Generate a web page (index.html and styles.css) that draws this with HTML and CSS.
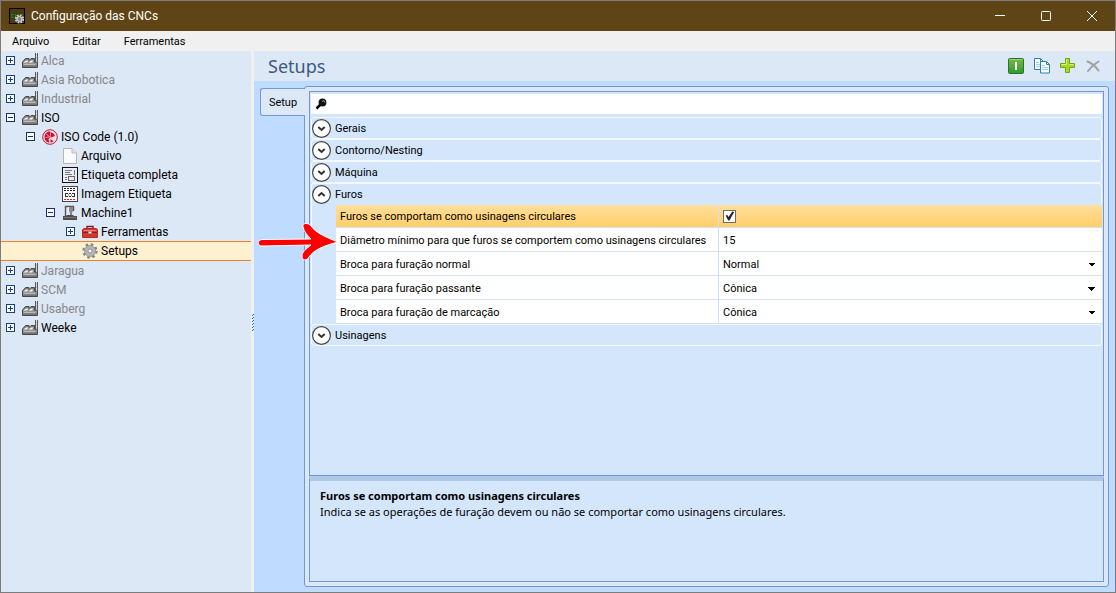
FILE: index.html
```
<!DOCTYPE html>
<html lang="pt-BR">

<head>
    <meta charset="UTF-8">
    <title>Configuração das CNCs</title>
    <link rel="stylesheet" href="styles.css">
</head>

<body>
    <svg class="icon-defs" aria-hidden="true">
        <linearGradient id="metal" x1="0" y1="0" x2="0" y2="1">
            <stop offset="0" stop-color="#777" />
            <stop offset=".6" stop-color="#999" />
            <stop offset="1" stop-color="#666" />
        </linearGradient>
        <linearGradient id="green" x1="0" y1="0" x2="0" y2="1">
            <stop offset="0" stop-color="#78b84c" />
            <stop offset="1" stop-color="#2f9a2c" />
        </linearGradient>
        <symbol id="plus" viewBox="0 0 9 9">
            <rect x=".5" y=".5" width="8" height="8" fill="#fff" stroke="#17407f" />
            <path d="M2 4.500h5M4.500 2v5" stroke="#17407f" />
        </symbol>
        <symbol id="minus" viewBox="0 0 9 9">
            <rect x=".5" y=".5" width="8" height="8" fill="#fff" stroke="#17306b" />
            <path d="M2 4.500h5" stroke="#17306b" />
        </symbol>
        <symbol id="factory" viewBox="0 0 16 16">
            <path d="M.5 14.500V9L3.500 5.500h3.500v2L9 5.500h3.500V9h3v5.500z" fill="url(#metal)" stroke="#4a4a4a" />
            <path d="M1.500 9.500 4 7.500h2.500L5 9.500zM6.500 9.500 9 7.500h2.500L10 9.500z" fill="#f4f4f4" />
            <path d="M13.500 0v10M15.500 0v10" stroke="#5a5a5a" />
            <path d="M14.500 1v8" stroke="#c8c8c8" stroke-dasharray="2 1" />
            <path d="M2 11.500h11" stroke="#bbb" />
        </symbol>
        <symbol id="iso" viewBox="0 0 16 16">
            <circle cx="8" cy="8" r="7.300" fill="#f4dce2" stroke="#b51f3b" />
            <path d="M8.500 2.500C5 2 2.500 5 2.500 8c0 3 2 5.500 5 5.500L6.500 10l2-1.500z" fill="#c81436" />
            <path d="M9 3.500v5l4-1.500C12.500 5 11 3.800 9 3.500zM8.500 10v3.500c1-.1 2-.5 3-1.300z" fill="#c81436" />
            <path d="M4 5l4 3M3.500 8.500l4-.5" stroke="#f4dce2" stroke-width=".6" />
        </symbol>
        <symbol id="file" viewBox="0 0 16 16">
            <path d="M1.500.5h8.500l4.500 4.500v10.500h-13z" fill="#fafafa" stroke="#b5b5b5" />
            <path d="M10 .5v4.500h4.500" fill="#e2e2e2" stroke="#bbb" />
        </symbol>
        <symbol id="label" viewBox="0 0 16 16">
            <rect x=".5" y=".5" width="15" height="15" fill="#e8edf5" stroke="#111" />
            <path d="M3 3.500h7M12 3.500h1M3 5.500h5M3 7.500h7M12.500 3v5M3 10.500h2M3 12.500h2" stroke="#777" />
            <rect x="6.500" y="9.500" width="6" height="4" fill="none" stroke="#666" />
        </symbol>
        <symbol id="image" viewBox="0 0 16 16">
            <rect x=".5" y=".5" width="15" height="15" fill="#fff" stroke="#444" />
            <path d="M2 2.500h12M2 4.500h12" stroke="#222" stroke-dasharray="2 1" />
            <path d="M3.500 7v4M12.500 7v4M3 7.500h3M10 7.500h3M3 10.500h3M10 10.500h3M6 9h1M9 9h1M7 10.500h2M7 7.500h2" stroke="#333" />
            <path d="M2 13.500h12" stroke="#e02020" stroke-dasharray="2 1" />
        </symbol>
        <symbol id="machine" viewBox="0 0 16 16">
            <path d="M3.500 11V1.500h8V6" fill="none" stroke="#555" stroke-width="1.400" />
            <path d="M1 11h3l1-1h6l1 1h3v4H1z" fill="#4d4d4d" />
            <path d="M7 2h4v4l-1 2H8L7 6z" fill="#8a8a8a" />
            <path d="M6.500 2v6" stroke="#eee" />
            <path d="M9 8v2" stroke="#222" />
            <path d="M2 12.500h12" stroke="#777" />
        </symbol>
        <symbol id="toolbox" viewBox="0 0 16 16">
            <path d="M5 4.500V2.500h6v2" fill="none" stroke="#7a2020" stroke-width="1.400" />
            <path d="M.5 5.500 2 4.500h12l1.500 1v8h-15z" fill="#d8342e" stroke="#b02c26" />
            <path d="M1 8.500h14" stroke="#8c1d1a" />
            <path d="M1.500 6.500h13" stroke="#f08078" />
            <path d="M6.500 7.500h3v2h-3z" fill="#eee" stroke="#999" />
        </symbol>
        <symbol id="gear" viewBox="0 0 16 16">
            <circle cx="8" cy="8" r="6.500" fill="none" stroke="#858585" stroke-width="2.400" stroke-dasharray="2.500 2.600" />
            <circle cx="8" cy="8" r="4.200" fill="none" stroke="#b4b4b4" stroke-width="3" />
            <circle cx="8" cy="8" r="5.600" fill="none" stroke="#888" stroke-width=".6" />
            <circle cx="8" cy="8" r="2.200" fill="#f2f2f2" stroke="#777" />
        </symbol>
        <symbol id="down" viewBox="0 0 19 19">
            <circle cx="9.500" cy="9.500" r="8.900" fill="#fff" stroke="#444" stroke-width="1.200" />
            <path d="m6.300 8 3.200 3 3.200-3" fill="none" stroke="#333" stroke-width="2" />
        </symbol>
        <symbol id="up" viewBox="0 0 19 19">
            <circle cx="9.500" cy="9.500" r="8.900" fill="#fff" stroke="#444" stroke-width="1.200" />
            <path d="m6.300 11 3.200-3 3.200 3" fill="none" stroke="#333" stroke-width="2" />
        </symbol>
    </svg>

    <div class="window">
        <header class="title-bar">
            <svg class="app-icon" viewBox="0 0 16 16">
                <rect x=".5" y=".5" width="15" height="15" fill="#4a3817" stroke="#000" />
                <path d="M5 6.500H2.500v3H5M6.500 10V6.500l3 3V6.500M14 6.500h-2.500v3" fill="none" stroke="#0b8a1e" />
                <circle cx="10.500" cy="11" r="3.600" fill="none" stroke="#ccc" stroke-width="2" stroke-dasharray="1.800 1" />
                <circle cx="10.500" cy="11" r="2.500" fill="#888" stroke="#ddd" />
            </svg>
            <h1>Configuração das CNCs</h1>
            <div class="window-buttons">
                <button aria-label="Minimizar"><svg viewBox="0 0 12 12"><path d="M1 5.500h10" /></svg></button>
                <button aria-label="Maximizar"><svg viewBox="0 0 12 12"><rect x="1.500" y="1.500" width="9" height="9" rx="1" /></svg></button>
                <button aria-label="Fechar"><svg viewBox="0 0 12 12"><path d="m1 1 10 10M11 1 1 11" /></svg></button>
            </div>
        </header>

        <nav class="menu-bar">
            <button>Arquivo</button>
            <button>Editar</button>
            <button>Ferramentas</button>
        </nav>

        <div class="content">
            <aside class="sidebar">
                <ul class="tree">
                    <li><button class="node muted"><svg class="toggle"><use href="#plus" /></svg><svg class="icon"><use href="#factory" /></svg>Alca</button></li>
                    <li><button class="node muted"><svg class="toggle"><use href="#plus" /></svg><svg class="icon"><use href="#factory" /></svg>Asia Robotica</button></li>
                    <li><button class="node muted"><svg class="toggle"><use href="#plus" /></svg><svg class="icon"><use href="#factory" /></svg>Industrial</button></li>
                    <li><button class="node"><svg class="toggle"><use href="#minus" /></svg><svg class="icon"><use href="#factory" /></svg>ISO</button></li>
                    <li><button class="node level-1"><svg class="toggle"><use href="#minus" /></svg><svg class="icon"><use href="#iso" /></svg>ISO Code (1.0)</button></li>
                    <li><button class="node level-2"><span class="toggle"></span><svg class="icon"><use href="#file" /></svg>Arquivo</button></li>
                    <li><button class="node level-2"><span class="toggle"></span><svg class="icon"><use href="#label" /></svg>Etiqueta completa</button></li>
                    <li><button class="node level-2"><span class="toggle"></span><svg class="icon"><use href="#image" /></svg>Imagem Etiqueta</button></li>
                    <li><button class="node level-2"><svg class="toggle"><use href="#minus" /></svg><svg class="icon"><use href="#machine" /></svg>Machine1</button></li>
                    <li><button class="node level-3"><svg class="toggle"><use href="#plus" /></svg><svg class="icon"><use href="#toolbox" /></svg>Ferramentas</button></li>
                    <li><button class="node level-3 selected"><span class="toggle"></span><svg class="icon"><use href="#gear" /></svg>Setups</button></li>
                    <li><button class="node muted"><svg class="toggle"><use href="#plus" /></svg><svg class="icon"><use href="#factory" /></svg>Jaragua</button></li>
                    <li><button class="node muted"><svg class="toggle"><use href="#plus" /></svg><svg class="icon"><use href="#factory" /></svg>SCM</button></li>
                    <li><button class="node muted"><svg class="toggle"><use href="#plus" /></svg><svg class="icon"><use href="#factory" /></svg>Usaberg</button></li>
                    <li><button class="node"><svg class="toggle"><use href="#plus" /></svg><svg class="icon"><use href="#factory" /></svg>Weeke</button></li>
                </ul>
            </aside>

            <div class="splitter">
                <svg viewBox="0 0 3 18"><path d="M1 2.500h1M2 1.500h1M1 5.500h1M2 4.500h1M1 8.500h1M2 7.500h1M1 11.500h1M2 10.500h1M1 14.500h1M2 13.500h1M1 17.500h1M2 16.500h1" stroke="#1c6fc4" /></svg>
            </div>

            <main class="main">
                <div class="page-header">
                    <h2>Setups</h2>
                    <div class="toolbar">
                        <button aria-label="Ativar">
                            <svg viewBox="0 0 16 16">
                                <rect x=".5" y=".5" width="15" height="15" rx="1" fill="url(#green)" stroke="#27742d" />
                                <path d="M1.500 1.500h13" stroke="#9bd070" />
                                <path d="M8 4v8" stroke="#fff" stroke-width="2" />
                            </svg>
                        </button>
                        <button aria-label="Copiar">
                            <svg viewBox="0 0 16 16">
                                <path d="M.5.5h6l3 3v8h-9z" fill="#fff" stroke="#2384b8" />
                                <path d="M2 4.500h3M2 6.500h4M2 8.500h4" stroke="#a9cde4" />
                                <path d="M6.500.5v3h3" fill="none" stroke="#2384b8" />
                                <path d="M6.500 3.500h6l3 3v8.500h-9z" fill="#fff" stroke="#2384b8" />
                                <path d="M8 7.500h3M8 9.500h6M8 11.500h6" stroke="#a9cde4" />
                                <path d="M12.500 3.500v3h3" fill="none" stroke="#2384b8" />
                            </svg>
                        </button>
                        <button aria-label="Adicionar">
                            <svg viewBox="0 0 16 16">
                                <path d="M5.500.5h4v5h5v4h-5v5h-4v-5h-5v-4h5z" fill="#a6d820" stroke="#70a716" />
                                <path d="M6.500 1.500v5h-5M9.500 6.500h4" fill="none" stroke="#dcf486" />
                            </svg>
                        </button>
                        <button aria-label="Excluir">
                            <svg viewBox="0 0 16 16">
                                <path d="M1.500 3.500c4 1.500 8 5 11 9M12.500 3.500C8 6 5 9 2 13" fill="none" stroke="#a0a0a0" stroke-width="2" stroke-linecap="round" />
                            </svg>
                        </button>
                    </div>
                </div>

                <div class="tab-area">
                    <button class="tab">Setup</button>
                    <section class="panel">
                        <div class="grid">
                            <label class="search">
                                <svg viewBox="0 0 12 12">
                                    <circle cx="7.500" cy="4.500" r="3.900" fill="#111" />
                                    <path d="M5 7 1.500 10.500" stroke="#000" stroke-width="2.500" />
                                    <path d="m7 3.500 2-1 1 2" fill="none" stroke="#6b9ab0" />
                                </svg>
                                <input type="text" aria-label="Pesquisar">
                            </label>

                            <button class="group"><svg><use href="#down" /></svg>Gerais</button>
                            <button class="group"><svg><use href="#down" /></svg>Contorno/Nesting</button>
                            <button class="group"><svg><use href="#down" /></svg>Máquina</button>
                            <button class="group open"><svg><use href="#up" /></svg>Furos</button>
                            <div class="properties">
                                <table>
                                    <tbody>
                                        <tr class="active">
                                            <th><label for="circular">Furos se comportam como usinagens circulares</label></th>
                                            <td><input type="checkbox" id="circular" checked></td>
                                        </tr>
                                        <tr>
                                            <th><label for="diameter">Diâmetro mínimo para que furos se comportem como usinagens circulares</label></th>
                                            <td><input type="text" id="diameter" value="15"></td>
                                        </tr>
                                        <tr>
                                            <th><label for="normal">Broca para furação normal</label></th>
                                            <td><select id="normal"><option>Normal</option><option>Cônica</option></select></td>
                                        </tr>
                                        <tr>
                                            <th><label for="through">Broca para furação passante</label></th>
                                            <td><select id="through"><option>Cônica</option><option>Normal</option></select></td>
                                        </tr>
                                        <tr>
                                            <th><label for="marking">Broca para furação de marcação</label></th>
                                            <td><select id="marking"><option>Cônica</option><option>Normal</option></select></td>
                                        </tr>
                                    </tbody>
                                </table>
                                <svg class="arrow" viewBox="0 0 84 42">
                                    <path d="M6 18.500C1 19 1 25 6 25l49-1c-5 4-9 7-9 11 0 5 5 5 7 1 4-6 13-11 29-15C69 16 59 11 55 5c-3-4-9-3-8 1 1 5 5 9 8 12z" />
                                </svg>
                            </div>
                            <button class="group"><svg><use href="#down" /></svg>Usinagens</button>
                        </div>
                        <div class="description">
                            <h3>Furos se comportam como usinagens circulares</h3>
                            <p>Indica se as operações de furação devem ou não se comportar como usinagens circulares.</p>
                        </div>
                    </section>
                </div>
            </main>
        </div>
    </div>
</body>

</html>
```
FILE: styles.css
```
* {
    box-sizing: border-box;
}

body {
    margin: 0;
    font-family: Roboto, "Open Sans", sans-serif;
    font-size: 11px;
    color: #000;
}

button,
input,
select {
    font: inherit;
    color: inherit;
    background: none;
    border: none;
    margin: 0;
    padding: 0;
}

h1,
h2,
h3,
p {
    margin: 0;
    font-weight: normal;
}

.icon-defs {
    position: absolute;
    width: 0;
    height: 0;
}

.window {
    display: flex;
    flex-direction: column;
    height: 100vh;
    border: 1px solid #7c7c7c;
    background-color: #f0f0f0;
}

/* title bar */

.title-bar {
    display: flex;
    align-items: center;
    height: 30px;
    padding-left: 8px;
    background-color: #5f4416;
    color: #fff;
}

.app-icon {
    width: 16px;
    height: 16px;
    margin-right: 6px;
}

.title-bar h1 {
    flex: 1;
    font-size: 12px;
}

.window-buttons {
    display: flex;
}

.window-buttons button {
    display: flex;
    align-items: center;
    justify-content: center;
    width: 46px;
    height: 30px;
}

.window-buttons svg {
    width: 12px;
    height: 12px;
    fill: none;
    stroke: #fff;
}

/* menu */

.menu-bar {
    display: flex;
    gap: 23px;
    height: 20px;
    padding-left: 11px;
}

.content {
    display: flex;
    flex: 1;
    min-height: 0;
}

/* tree */

.sidebar {
    width: 250px;
    background-color: #dde8f7;
}

.tree {
    list-style: none;
    margin: 0;
    padding: 0;
    font-size: 12px;
}

.node {
    display: flex;
    align-items: center;
    width: 100%;
    height: 19px;
    padding-left: 5px;
}

.node.muted {
    color: #868686;
}

.level-1 {
    padding-left: 25px;
}

.level-2 {
    padding-left: 45px;
}

.level-3 {
    padding-left: 65px;
}

.node.selected {
    height: 20px;
    background-color: #fff0cf;
    border-top: 1px solid #f58220;
    border-bottom: 1px solid #f58220;
}

.toggle {
    width: 9px;
    height: 9px;
    margin-right: 7px;
}

.icon {
    width: 16px;
    height: 16px;
    margin-right: 3px;
}

.splitter {
    display: flex;
    align-items: center;
    width: 3px;
}

.splitter svg {
    width: 3px;
    height: 18px;
}

/* main area */

.main {
    display: flex;
    flex-direction: column;
    flex: 1;
    min-width: 0;
    background-color: #bfdbff;
}

.page-header {
    display: flex;
    align-items: center;
    justify-content: space-between;
    height: 30px;
    padding: 0 13px 0 14px;
    background-color: #dde8f7;
}

.page-header h2 {
    font-family: "Noto Sans", sans-serif;
    font-size: 18px;
    color: #3c5a7d;
}

.toolbar {
    display: flex;
    gap: 10px;
}

.toolbar svg {
    display: block;
    width: 16px;
    height: 16px;
}

.tab-area {
    display: flex;
    flex: 1;
    align-items: flex-start;
    min-height: 0;
    padding: 5px 6px;
}

.tab {
    z-index: 1;
    width: 45px;
    height: 28px;
    margin-top: 2px;
    margin-right: -1px;
    background-color: #dde8f7;
    border: 1px solid #6f99d6;
    border-right: none;
    border-radius: 3px 0 0 3px;
}

.panel {
    display: flex;
    flex-direction: column;
    flex: 1;
    align-self: stretch;
    min-width: 0;
    padding: 4px;
    background-color: #dde8f7;
    border: 1px solid #6f99d6;
    border-radius: 3px;
}

.grid {
    flex: 1;
    padding: 2px 1px;
    background-color: #d4e6fc;
    border: 1px solid #6f99d6;
}

.search {
    display: flex;
    align-items: center;
    height: 20px;
    margin-bottom: 3px;
    padding-left: 4px;
    background-color: #fff;
}

.search svg {
    width: 12px;
    height: 12px;
}

.search input {
    flex: 1;
    outline: none;
}

.group {
    display: flex;
    align-items: center;
    width: 100%;
    height: 22px;
    border: 1px solid #f4f9ff;
    border-radius: 3px;
}

.group svg {
    width: 19px;
    height: 19px;
    margin-right: 4px;
}

.group.open {
    border-bottom: none;
}

.properties {
    position: relative;
    padding-left: 24px;
    border-left: 1px solid #f4f9ff;
}

table {
    width: 100%;
    table-layout: fixed;
    border-spacing: 0;
    background-color: #fff;
}

th,
td {
    height: 24px;
    padding: 2px 4px 0;
    border-bottom: 1px solid #d0e1f5;
    font-weight: normal;
    text-align: left;
    white-space: nowrap;
}

th {
    width: 50%;
    border-right: 1px solid #d0e1f5;
}

.active th,
.active td {
    height: 23px;
    padding-top: 0;
    background: linear-gradient(#ffdf9b, #ffce69);
}

td input[type="text"],
select {
    display: block;
    width: 100%;
    outline: none;
}

input[type="checkbox"] {
    display: block;
    width: 13px;
    height: 13px;
    appearance: none;
    background-color: #fff;
    border: 1px solid #6c6c6c;
}

input[type="checkbox"]:checked::after {
    content: "";
    display: block;
    height: 11px;
    background-color: #222;
    clip-path: polygon(15% 45%, 30% 40%, 42% 60%, 75% 10%, 92% 14%, 50% 92%, 38% 92%);
}

select {
    appearance: none;
    background: linear-gradient(to bottom right, #000 50%, transparent 50%) right 2px center / 4px 4px no-repeat,
        linear-gradient(to bottom left, #000 50%, transparent 50%) right 6px center / 4px 4px no-repeat;
}

.arrow {
    position: absolute;
    left: -56px;
    top: 16px;
    width: 84px;
    height: 42px;
    fill: #f00;
    stroke: #fff;
    stroke-width: 1px;
}

.description {
    height: 106px;
    padding: 7px 10px;
    background-color: #d4e6fc;
    border: 1px solid #6f99d6;
    border-top: 5px solid #b1c7e7;
    font-family: "Noto Sans", sans-serif;
}

.description h3 {
    font-size: 11px;
    line-height: 16px;
    font-weight: bold;
}

.description p {
    line-height: 16px;
}
```
